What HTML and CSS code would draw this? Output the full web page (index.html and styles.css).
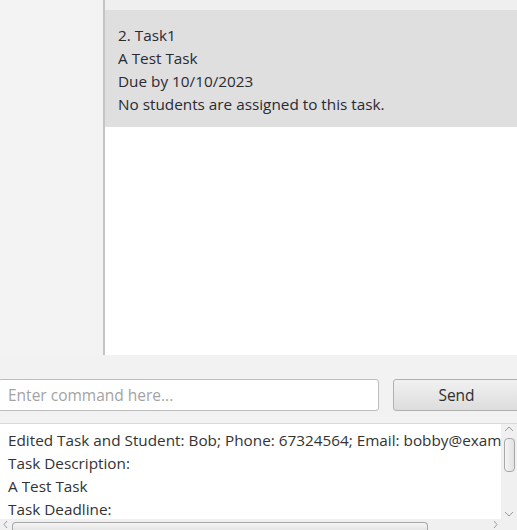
FILE: index.html
```html
<!DOCTYPE html>
<html>
<head>
<meta charset="utf-8">
<link rel="stylesheet" href="styles.css">
</head>
<body>
<div class="app">
  <div class="main">
    <div class="sidebar"></div>
    <div class="list">
      <div class="list-top"></div>
      <div class="card">
        <div class="line">2. Task1</div>
        <div class="line">A Test Task</div>
        <div class="line">Due by 10/10/2023</div>
        <div class="line">No students are assigned to this task.</div>
      </div>
      <div class="list-rest"></div>
    </div>
  </div>
  <div class="bottom">
    <div class="command-row">
      <div class="cmd-input">Enter command here...</div>
      <div class="send-btn">Send</div>
    </div>
    <div class="result">
      <div class="result-body">
        <div class="result-text">
          <div class="rline">Edited Task and Student: Bob; Phone: 67324564; Email: bobby@example.com</div>
          <div class="rline">Task Description:</div>
          <div class="rline">A Test Task</div>
          <div class="rline">Task Deadline:</div>
        </div>
        <div class="vscroll">
          <svg class="arrow" width="16" height="10" viewBox="0 0 16 10"><path d="M4 7 L8 3 L12 7" fill="none" stroke="#9a9a9a" stroke-width="1"/></svg>
          <div class="vthumb"></div>
          <div class="vspace"></div>
          <svg class="arrow" width="16" height="10" viewBox="0 0 16 10"><path d="M4 3 L8 7 L12 3" fill="none" stroke="#9a9a9a" stroke-width="1"/></svg>
        </div>
      </div>
      <div class="hscroll">
        <svg class="harrow" width="12" height="11" viewBox="0 0 12 11"><path d="M7 2 L4 5.5 L7 9" fill="none" stroke="#9a9a9a" stroke-width="1"/></svg>
        <div class="hthumb"></div>
        <div class="hspace"></div>
        <svg class="harrow" width="12" height="11" viewBox="0 0 12 11"><path d="M5 2 L8 5.5 L5 9" fill="none" stroke="#9a9a9a" stroke-width="1"/></svg>
        <div class="hcorner"></div>
      </div>
    </div>
  </div>
</div>
</body>
</html>
```

FILE: styles.css
```css
html, body {
  margin: 0;
  padding: 0;
  width: 517px;
  height: 530px;
  overflow: hidden;
  background: #f2f2f2;
}
.app {
  display: flex;
  flex-direction: column;
  width: 517px;
  height: 530px;
  font-family: "Open Sans", "DejaVu Sans", sans-serif;
}
.main {
  display: flex;
  height: 355px;
}
.sidebar {
  width: 103px;
  background: #f3f3f3;
  border-right: 2px solid #c4c4c4;
}
.list {
  flex: 1;
  display: flex;
  flex-direction: column;
  background: #ffffff;
}
.list-top {
  height: 10px;
  background: #efefef;
}
.card {
  height: 117px;
  background: #dfdfdf;
  padding: 14px 0 0 13px;
  box-sizing: border-box;
  color: #2a2a33;
}
.line {
  font-size: 15.3px;
  line-height: 23px;
  white-space: nowrap;
}
.list-rest {
  flex: 1;
  background: #ffffff;
}
.bottom {
  flex: 1;
  display: flex;
  flex-direction: column;
  background: #f2f2f2;
}
.command-row {
  display: flex;
  margin-top: 24px;
  height: 32px;
  gap: 14px;
  margin-left: -2px;
}
.cmd-input {
  width: 381px;
  flex-shrink: 0;
  box-sizing: border-box;
  background: #ffffff;
  border: 1px solid #bdbdbd;
  border-radius: 3px;
  color: #a3a3a3;
  font-size: 15.5px;
  line-height: 31px;
  padding-left: 9px;
}
.send-btn {
  width: 127px;
  flex-shrink: 0;
  box-sizing: border-box;
  border: 1px solid #b0b0b0;
  border-radius: 3px;
  background: linear-gradient(#f1f1f1, #dddddd);
  color: #2e2e2e;
  font-size: 15.5px;
  line-height: 31px;
  text-align: center;
}
.result {
  margin-top: 12px;
  border-top: 1px solid #d8d8d8;
  display: flex;
  flex-direction: column;
  flex: 1;
}
.result-body {
  display: flex;
  height: 95px;
}
.result-text {
  flex: 1;
  min-width: 0;
  background: #ffffff;
  overflow: hidden;
  padding: 5px 0 0 8px;
  color: #333333;
}
.rline {
  font-size: 15.3px;
  line-height: 23px;
  white-space: nowrap;
}
.vscroll {
  width: 16px;
  flex-shrink: 0;
  background: #f0f0f0;
  display: flex;
  flex-direction: column;
  align-items: center;
}
.arrow {
  display: block;
  flex-shrink: 0;
}
.vthumb {
  width: 9px;
  height: 32px;
  margin-top: 4px;
  border: 1px solid #a8a8a8;
  border-radius: 4px;
  background: linear-gradient(90deg, #f4f4f4, #e2e2e2);
}
.vspace {
  flex: 1;
}
.hscroll {
  display: flex;
  align-items: center;
  height: 11px;
  background: #f0f0f0;
}
.harrow {
  display: block;
  flex-shrink: 0;
}
.hthumb {
  width: 414px;
  height: 9px;
  margin-top: 4px;
  border: 1px solid #a8a8a8;
  border-bottom: none;
  border-radius: 4px 4px 0 0;
  background: linear-gradient(#f4f4f4, #e2e2e2);
}
.hspace {
  flex: 1;
}
.hcorner {
  width: 16px;
  height: 11px;
}
```
